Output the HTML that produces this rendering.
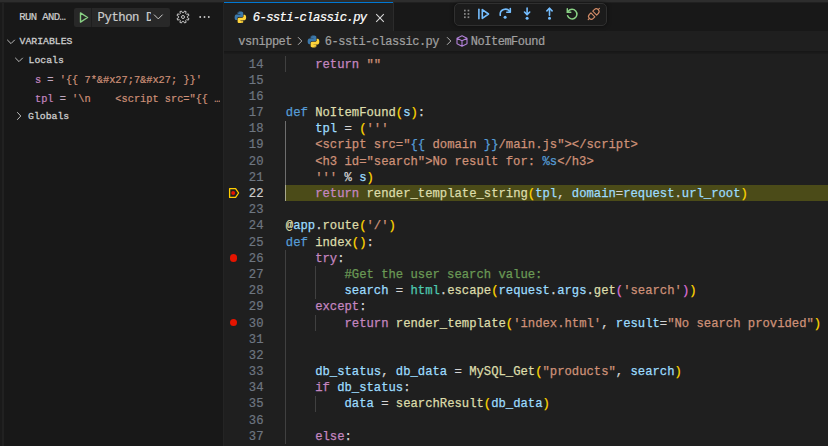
<!DOCTYPE html>
<html><head><meta charset="utf-8">
<style>
*{margin:0;padding:0;box-sizing:border-box}
html,body{width:828px;height:446px;overflow:hidden;background:#181818}
body{position:relative;font-family:"Liberation Mono",monospace;color:#cccccc}
.abs{position:absolute}
.t{position:absolute;white-space:pre;line-height:1;-webkit-text-stroke:0.2px currentColor}
#code{position:absolute;left:0;top:0;width:828px;height:446px}
.cl{position:absolute;-webkit-text-stroke:0.25px currentColor;left:285.8px;white-space:pre;font-size:12.23px;line-height:16.16px;height:16.16px;color:#d4d4d4}
.lnum{position:absolute;-webkit-text-stroke:0.2px currentColor;left:230px;width:33.5px;text-align:right;white-space:pre;font-size:12.23px;line-height:16.16px;height:16.16px;color:#6e7681}
.g{position:absolute;width:1px;background:#404040}
.k{color:#c586c0}.d{color:#569cd6}.f{color:#dcdcaa}.v{color:#9cdcfe}.s{color:#ce9178}.c{color:#6a9955}.y{color:#ffd700}.p{color:#da70d6}.m{color:#4ec9b0}.o{color:#d4d4d4}
</style></head><body>
<!-- top band -->
<div class="abs" style="left:0;top:0;width:828px;height:2px;background:#2d2d2d"></div>
<div class="abs" style="left:0;top:2px;width:2px;height:444px;background:#1a1a1a"></div>
<div class="abs" style="left:1.6px;top:2px;width:2px;height:444px;background:#212121"></div>
<!-- sidebar -->
<div class="abs" style="left:223px;top:2px;width:1px;height:444px;background:#242424"></div>
<div class="t" style="left:19.3px;top:12.2px;font-size:10.6px;letter-spacing:-0.6px;color:#cccccc">RUN AND…</div>
<div class="abs" style="left:73.6px;top:7.6px;width:96px;height:19.2px;background:#282828;border-radius:2px"></div>
<div class="abs" style="left:91.2px;top:7.6px;width:1px;height:19.2px;background:#1e1e1e"></div>
<svg class="abs" style="left:78px;top:11px" width="12" height="13" viewBox="0 0 12 13"><path d="M2.5 1.9 L9.6 6.5 L2.5 11.1 Z" fill="none" stroke="#89d185" stroke-width="1.4" stroke-linejoin="round"/></svg>
<div class="t" style="left:97.6px;top:12.1px;font-size:12.3px;letter-spacing:-0.48px;color:#cccccc;width:53px;overflow:hidden">Python Debug</div>
<svg class="abs" style="left:152.5px;top:12px" width="11" height="9" viewBox="0 0 11 9"><path d="M1 2.6 L5.3 6.9 L9.6 2.6" fill="none" stroke="#cccccc" stroke-width="1"/></svg>
<svg class="abs" style="left:174.5px;top:8.85px" width="16" height="16" viewBox="0 0 16 16"><path d="M12.44 8.70 L13.99 9.59 L13.36 11.11 L11.64 10.65 L10.65 11.64 L11.11 13.36 L9.59 13.99 L8.70 12.44 L7.30 12.44 L6.41 13.99 L4.89 13.36 L5.35 11.64 L4.36 10.65 L2.64 11.11 L2.01 9.59 L3.56 8.70 L3.56 7.30 L2.01 6.41 L2.64 4.89 L4.36 5.35 L5.35 4.36 L4.89 2.64 L6.41 2.01 L7.30 3.56 L8.70 3.56 L9.59 2.01 L11.11 2.64 L10.65 4.36 L11.64 5.35 L13.36 4.89 L13.99 6.41 L12.44 7.30 Z" fill="none" stroke="#cccccc" stroke-width="0.95" stroke-linejoin="round"/><circle cx="8" cy="8" r="1.5" fill="none" stroke="#cccccc" stroke-width="0.95"/></svg>

<svg class="abs" style="left:195px;top:12px" width="20" height="10" viewBox="0 0 20 10"><g fill="#cccccc"><circle cx="5.2" cy="4.95" r="0.95"/><circle cx="9.5" cy="4.95" r="0.95"/><circle cx="13.8" cy="4.95" r="0.95"/></g></svg>
<svg class="abs" style="left:6px;top:37.5px" width="10" height="8" viewBox="0 0 10 8"><path d="M1.2 1.8 L5 5.6 L8.8 1.8" fill="none" stroke="#bbbbbb" stroke-width="1"/></svg>
<div class="t" style="left:19.5px;top:36.8px;font-size:9.8px;color:#cccccc;-webkit-text-stroke:0.3px #cccccc">VARIABLES</div>
<svg class="abs" style="left:14px;top:56px" width="10" height="8" viewBox="0 0 10 8"><path d="M1.2 1.8 L5 5.6 L8.8 1.8" fill="none" stroke="#bbbbbb" stroke-width="1"/></svg>
<div class="t" style="left:28.5px;top:55.6px;font-size:9.8px;color:#cccccc;-webkit-text-stroke:0.3px #cccccc">Locals</div>
<div class="t" style="left:35px;top:74.8px;font-size:10.3px;color:#ce9178"><span style="color:#c586c0">s</span><span style="color:#c0a8c0"> = </span>'{{ 7*&amp;#x27;7&amp;#x27; }}'</div>
<div class="t" style="left:35px;top:93.6px;font-size:10.3px;color:#ce9178;width:185px;overflow:hidden"><span style="color:#c586c0">tpl</span><span style="color:#c0a8c0"> = </span>'\n    &lt;script src="{{ …</div>
<svg class="abs" style="left:14.6px;top:111px" width="8" height="10" viewBox="0 0 8 10"><path d="M2.2 1.2 L5.8 5 L2.2 8.8" fill="none" stroke="#bbbbbb" stroke-width="1"/></svg>
<div class="t" style="left:28px;top:111.6px;font-size:9.8px;color:#cccccc;-webkit-text-stroke:0.3px #cccccc">Globals</div>

<!-- editor -->
<div class="abs" style="left:224px;top:2px;width:604px;height:444px;background:#1f1f1f"></div>
<!-- tab bar -->
<div class="abs" style="left:224px;top:2px;width:604px;height:28.5px;background:#181818"></div>
<div class="abs" style="left:224px;top:2px;width:168.5px;height:28.5px;background:#1f1f1f"></div>
<div class="abs" style="left:0;top:2px;width:828px;height:1px;background:#202020"></div>
<div class="abs" style="left:224px;top:2px;width:168.5px;height:1.3px;background:#0078d4"></div>
<div class="abs" style="left:392.5px;top:2px;width:1px;height:28.5px;background:#2b2b2b"></div>
<svg class="abs" style="left:234px;top:10.5px" width="12.8" height="12.8" viewBox="0 0 16 16">
<path fill="#3c78aa" d="M7.9 0.6C4.3 0.6 4.5 2.2 4.5 2.2V3.9H8V4.4H3.1C3.1 4.4 0.8 4.1 0.8 7.8C0.8 11.5 2.8 11.4 2.8 11.4H4.1V9.6C4.1 9.6 4 7.6 6 7.6H9.6C9.6 7.6 11.5 7.6 11.5 5.8V2.6C11.5 2.6 11.8 0.6 7.9 0.6ZM6 1.7A.6.6 0 1 1 6 2.9.6.6 0 0 1 6 1.7Z"/>
<path fill="#ffd43b" d="M8.1 15.4C11.7 15.4 11.5 13.8 11.5 13.8V12.1H8V11.6H12.9C12.9 11.6 15.2 11.9 15.2 8.2C15.2 4.5 13.2 4.6 13.2 4.6H11.9V6.4C11.9 6.4 12 8.4 10 8.4H6.4C6.4 8.4 4.5 8.4 4.5 10.2V13.4C4.5 13.4 4.2 15.4 8.1 15.4ZM10 14.3A.6.6 0 1 1 10 13.1.6.6 0 0 1 10 14.3Z"/></svg>
<div class="t" style="left:252.8px;top:12px;font-size:12.3px;letter-spacing:-0.69px;font-style:italic;color:#ffffff">6-ssti-classic.py</div>
<svg class="abs" style="left:375px;top:12.5px" width="10" height="10" viewBox="0 0 10 10"><path d="M1.2 1.2 L8.8 8.8 M8.8 1.2 L1.2 8.8" stroke="#d8d8d8" stroke-width="1.05"/></svg>

<!-- breadcrumbs -->
<div class="abs" style="left:224px;top:51px;width:604px;height:2.5px;background:linear-gradient(#161616,#1c1c1c)"></div>
<div class="t" style="left:238.3px;top:35.9px;font-size:12px;letter-spacing:-0.48px;color:#a0a0a0">vsnippet</div>
<svg class="abs" style="left:296px;top:36px" width="8" height="11" viewBox="0 0 8 11"><path d="M2 1.2 L5.8 5 L2 8.8" fill="none" stroke="#b0b0b0" stroke-width="1"/></svg>
<svg class="abs" style="left:307px;top:35px" width="13" height="13" viewBox="0 0 16 16">
<path fill="#3c78aa" d="M7.9 0.6C4.3 0.6 4.5 2.2 4.5 2.2V3.9H8V4.4H3.1C3.1 4.4 0.8 4.1 0.8 7.8C0.8 11.5 2.8 11.4 2.8 11.4H4.1V9.6C4.1 9.6 4 7.6 6 7.6H9.6C9.6 7.6 11.5 7.6 11.5 5.8V2.6C11.5 2.6 11.8 0.6 7.9 0.6ZM6 1.7A.6.6 0 1 1 6 2.9.6.6 0 0 1 6 1.7Z"/>
<path fill="#ffd43b" d="M8.1 15.4C11.7 15.4 11.5 13.8 11.5 13.8V12.1H8V11.6H12.9C12.9 11.6 15.2 11.9 15.2 8.2C15.2 4.5 13.2 4.6 13.2 4.6H11.9V6.4C11.9 6.4 12 8.4 10 8.4H6.4C6.4 8.4 4.5 8.4 4.5 10.2V13.4C4.5 13.4 4.2 15.4 8.1 15.4ZM10 14.3A.6.6 0 1 1 10 13.1.6.6 0 0 1 10 14.3Z"/></svg>
<div class="t" style="left:324.8px;top:35.9px;font-size:12px;letter-spacing:-0.48px;color:#a0a0a0">6-ssti-classic.py</div>
<svg class="abs" style="left:444.5px;top:36px" width="8" height="11" viewBox="0 0 8 11"><path d="M2 1.2 L5.8 5 L2 8.8" fill="none" stroke="#b0b0b0" stroke-width="1"/></svg>
<svg class="abs" style="left:456px;top:35.3px" width="12" height="12" viewBox="0 0 12 12"><path d="M6 0.8 L11 3.3 L11 8.7 L6 11.2 L1 8.7 L1 3.3 Z M1 3.3 L6 5.8 L11 3.3 M6 5.8 L6 11.2" fill="none" stroke="#b180d7" stroke-width="1.1" stroke-linejoin="round"/></svg>
<div class="t" style="left:470.8px;top:35.9px;font-size:12px;letter-spacing:-0.48px;color:#a0a0a0">NoItemFound</div>

<!-- code -->
<div id="code">
<div class="abs" style="left:285px;top:185.2px;width:543px;height:16px;background:#4b4b18"></div>
<div class="g" style="left:285.20px;top:120.66px;height:64.76px;background:#6e6e6e"></div>
<div class="g" style="left:285.20px;top:185.2px;height:16px;background:#a8a890"></div>
<div class="g" style="left:285.20px;top:55.90px;height:16.19px"></div>
<div class="g" style="left:285.20px;top:250.18px;height:194.28px"></div>
<div class="g" style="left:314.56px;top:266.37px;height:32.38px"></div>
<div class="g" style="left:314.56px;top:314.94px;height:16.19px"></div>
<div class="g" style="left:314.56px;top:395.89px;height:16.19px"></div>
<div class="lnum" style="top:56.50px;">14</div>
<div class="cl" style="top:56.50px">    <span class="k">return</span> <span class="s">""</span></div>
<div class="lnum" style="top:72.69px;">15</div>
<div class="lnum" style="top:88.88px;">16</div>
<div class="lnum" style="top:105.07px;">17</div>
<div class="cl" style="top:105.07px"><span class="d">def</span> <span class="f">NoItemFound</span><span class="y">(</span><span class="v">s</span><span class="y">)</span><span class="o">:</span></div>
<div class="lnum" style="top:121.26px;">18</div>
<div class="cl" style="top:121.26px">    <span class="v">tpl</span><span class="o"> = </span><span class="y">(</span><span class="s">'''</span></div>
<div class="lnum" style="top:137.45px;">19</div>
<div class="cl" style="top:137.45px">    <span class="s">&lt;script src="</span><span class="d">{{</span><span class="s"> domain </span><span class="d">}}</span><span class="s">/main.js"&gt;&lt;/script&gt;</span></div>
<div class="lnum" style="top:153.64px;">20</div>
<div class="cl" style="top:153.64px">    <span class="s">&lt;h3 id="search"&gt;No result for: </span><span class="d">%s</span><span class="s">&lt;/h3&gt;</span></div>
<div class="lnum" style="top:169.83px;">21</div>
<div class="cl" style="top:169.83px">    <span class="s">'''</span><span class="o"> % </span><span class="v">s</span><span class="y">)</span></div>
<div class="lnum" style="top:186.02px;color:#cccccc;">22</div>
<div class="cl" style="top:186.02px">    <span class="k">return</span> <span class="f">render_template_string</span><span class="y">(</span><span class="v">tpl</span><span class="o">, </span><span class="v">domain</span><span class="o">=</span><span class="v">request</span><span class="o">.</span><span class="v">url_root</span><span class="y">)</span></div>
<div class="lnum" style="top:202.21px;">23</div>
<div class="lnum" style="top:218.40px;">24</div>
<div class="cl" style="top:218.40px"><span class="f">@</span><span class="v">app</span><span class="o">.</span><span class="f">route</span><span class="y">(</span><span class="s">'/'</span><span class="y">)</span></div>
<div class="lnum" style="top:234.59px;">25</div>
<div class="cl" style="top:234.59px"><span class="d">def</span> <span class="f">index</span><span class="y">(</span><span class="y">)</span><span class="o">:</span></div>
<div class="lnum" style="top:250.78px;">26</div>
<div class="cl" style="top:250.78px">    <span class="k">try</span><span class="o">:</span></div>
<div class="lnum" style="top:266.97px;">27</div>
<div class="cl" style="top:266.97px">        <span class="c">#Get the user search value:</span></div>
<div class="lnum" style="top:283.16px;">28</div>
<div class="cl" style="top:283.16px">        <span class="v">search</span><span class="o"> = </span><span class="m">html</span><span class="o">.</span><span class="f">escape</span><span class="y">(</span><span class="v">request</span><span class="o">.</span><span class="v">args</span><span class="o">.</span><span class="f">get</span><span class="p">(</span><span class="s">'search'</span><span class="p">)</span><span class="y">)</span></div>
<div class="lnum" style="top:299.35px;">29</div>
<div class="cl" style="top:299.35px">    <span class="k">except</span><span class="o">:</span></div>
<div class="lnum" style="top:315.54px;">30</div>
<div class="cl" style="top:315.54px">        <span class="k">return</span> <span class="f">render_template</span><span class="y">(</span><span class="s">'index.html'</span><span class="o">, </span><span class="v">result</span><span class="o">=</span><span class="s">"No search provided"</span><span class="y">)</span></div>
<div class="lnum" style="top:331.73px;">31</div>
<div class="lnum" style="top:347.92px;">32</div>
<div class="lnum" style="top:364.11px;">33</div>
<div class="cl" style="top:364.11px">    <span class="v">db_status</span><span class="o">, </span><span class="v">db_data</span><span class="o"> = </span><span class="f">MySQL_Get</span><span class="y">(</span><span class="s">"products"</span><span class="o">, </span><span class="v">search</span><span class="y">)</span></div>
<div class="lnum" style="top:380.30px;">34</div>
<div class="cl" style="top:380.30px">    <span class="k">if</span> <span class="v">db_status</span><span class="o">:</span></div>
<div class="lnum" style="top:396.49px;">35</div>
<div class="cl" style="top:396.49px">        <span class="v">data</span><span class="o"> = </span><span class="f">searchResult</span><span class="y">(</span><span class="v">db_data</span><span class="y">)</span></div>
<div class="lnum" style="top:412.68px;">36</div>
<div class="lnum" style="top:428.87px;">37</div>
<div class="cl" style="top:428.87px">    <span class="k">else</span><span class="o">:</span></div>
</div>

<!-- gutter icons -->
<svg class="abs" style="left:227px;top:186px" width="14" height="14" viewBox="0 0 14 14"><path d="M2.6 2.6 H8.6 L11.6 7 L8.6 11.4 H2.6 Z" fill="none" stroke="#ffcc00" stroke-width="1.3" stroke-linejoin="round"/><circle cx="6.2" cy="7" r="2" fill="#e51400"/></svg>
<div class="abs" style="left:229.8px;top:254.3px;width:7.4px;height:7.4px;border-radius:50%;background:#e51400"></div>
<div class="abs" style="left:229.8px;top:318.9px;width:7.4px;height:7.4px;border-radius:50%;background:#e51400"></div>
<!-- debug toolbar -->
<div class="abs" style="left:453.5px;top:3px;width:153px;height:23px;background:#1b1b1b;border:1px solid #303030;border-radius:5px;box-shadow:0 0 4px rgba(0,0,0,0.5)"></div>
<svg class="abs" style="left:453px;top:0px" width="160" height="28" viewBox="0 0 160 28">
<g fill="#8c8c8c"><rect x="11" y="9.7" width="1.7" height="1.7"/><rect x="14.6" y="9.7" width="1.7" height="1.7"/><rect x="11" y="13.1" width="1.7" height="1.7"/><rect x="14.6" y="13.1" width="1.7" height="1.7"/><rect x="11" y="16.4" width="1.7" height="1.7"/><rect x="14.6" y="16.4" width="1.7" height="1.7"/></g>
<g fill="none" stroke="#75beff" stroke-width="1.6" stroke-linejoin="round" stroke-linecap="round">
<path d="M25.9 9.3 V18.7"/><path d="M29.3 9.6 L35.5 14 L29.3 18.4 Z"/>
<path d="M47.3 15.3 A5.2 5.2 0 0 1 56.9 11.8"/><path d="M57.3 8.6 V12.2 H53.8"/>
<path d="M74.1 8 V14.5"/><path d="M71.5 12 L74.1 14.6 L76.7 12"/>
<path d="M96.5 15.2 V8.3"/><path d="M93.9 10.9 L96.5 8.3 L99.1 10.9"/>
</g>
<g fill="#75beff"><circle cx="52.1" cy="17.3" r="1.5"/><circle cx="74.1" cy="18.2" r="1.5"/><circle cx="96.5" cy="18.2" r="1.5"/></g>
<g fill="none" stroke="#89d185" stroke-width="1.5" stroke-linecap="round">
<path d="M115.3 11.2 A4.8 4.8 0 1 1 114.6 15.8"/><path d="M114.3 8.8 V12.3 H117.8"/>
</g>
<g fill="none" stroke="#d08a66" stroke-width="1.25" stroke-linejoin="round" stroke-linecap="round" transform="translate(140.8 14) rotate(-45) scale(0.92)">
<path d="M-1.4 -3 H-3.8 A3 3 0 0 0 -3.8 3 H-1.4 Z"/><path d="M-6.8 0 H-8.6"/>
<path d="M1.4 -3 H3.8 A3 3 0 0 1 3.8 3 H1.4 Z"/><path d="M6.8 0 H8.6"/>
</g>
</svg>
</body></html>
